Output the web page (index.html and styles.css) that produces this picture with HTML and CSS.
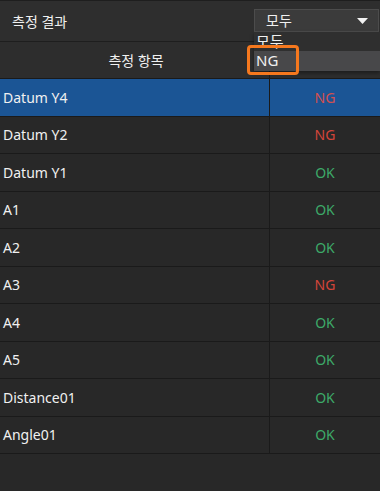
FILE: index.html
```html
<!DOCTYPE html>
<html lang="ko">
<head>
    <meta charset="UTF-8">
    <meta name="viewport" content="width=device-width, initial-scale=1.0">
    <title>측정 결과</title>
    <link rel="stylesheet" href="styles.css">
</head>
<body>
    <div class="topbar">
        <span class="topbar-title">측정 결과</span>
        <div class="combo">
            <span>모두</span>
            <svg class="combo-arrow" width="11" height="6" viewBox="0 0 11 6"><path d="M0 0 H11 L5.5 6 Z" fill="#f2f2f2"/></svg>
        </div>
        <!-- open dropdown list -->
        <div class="combo-list">
            <div class="combo-item">모두</div>
            <div class="combo-item hover">NG</div>
            <div class="highlight"></div>
        </div>
    </div>
    <div class="table">
        <div class="row header">
            <div class="cell name">측정 항목</div>
            <div class="cell result">결과</div>
        </div>
        <div class="row selected">
            <div class="cell name">Datum Y4</div>
            <div class="cell result ng">NG</div>
        </div>
        <div class="row">
            <div class="cell name">Datum Y2</div>
            <div class="cell result ng">NG</div>
        </div>
        <div class="row">
            <div class="cell name">Datum Y1</div>
            <div class="cell result ok">OK</div>
        </div>
        <div class="row">
            <div class="cell name">A1</div>
            <div class="cell result ok">OK</div>
        </div>
        <div class="row">
            <div class="cell name">A2</div>
            <div class="cell result ok">OK</div>
        </div>
        <div class="row">
            <div class="cell name">A3</div>
            <div class="cell result ng">NG</div>
        </div>
        <div class="row">
            <div class="cell name">A4</div>
            <div class="cell result ok">OK</div>
        </div>
        <div class="row">
            <div class="cell name">A5</div>
            <div class="cell result ok">OK</div>
        </div>
        <div class="row">
            <div class="cell name">Distance01</div>
            <div class="cell result ok">OK</div>
        </div>
        <div class="row">
            <div class="cell name">Angle01</div>
            <div class="cell result ok">OK</div>
        </div>
    </div>
</body>
</html>
```

FILE: styles.css
```css
body {
    margin: 0;
    background-color: #282828;
    color: #f0f0f0;
    font-family: "Noto Sans", "Noto Sans CJK KR", sans-serif;
    font-size: 14px;
    overflow: hidden;
}
.topbar {
    position: relative;
    height: 40px;
    display: flex;
    align-items: center;
    justify-content: space-between;
    padding: 0 1px 0 12px;
    background-color: #2e2e2e;
    border-top: 1px solid #1e1e1e;
    border-bottom: 1px solid #1e1e1e;
}
.topbar-title {
    margin-top: -1px;
}
.combo {
    width: 102px;
    height: 21px;
    display: flex;
    align-items: center;
    justify-content: space-between;
    padding: 0 10px 0 11px;
    margin-bottom: 1px;
    background-color: #3b3b3b;
    border: 1px solid #4c4c4c;
    line-height: 1;
}
.combo-arrow {
    display: block;
}
.combo-list {
    position: absolute;
    left: 254px;
    top: 31px;
    width: 126px;
    background-color: #2f2f2f;
    z-index: 2;
    box-shadow: 0 2px 4px rgba(0, 0, 0, 0.4);
}
.combo-item {
    height: 19px;
    line-height: 19px;
    padding-left: 2px;
    font-size: 15px;
}
.combo-item.hover {
    background-color: #48484a;
    height: 20px;
}
.highlight {
    position: absolute;
    left: -7px;
    top: 13px;
    width: 46px;
    height: 24px;
    border: 3px solid #f5781e;
    border-radius: 4px;
}
.row {
    display: grid;
    grid-template-columns: 270px 1fr;
    height: 36.5px;
    border-bottom: 1px solid #1a1a1a;
    align-items: stretch;
}
.row.header {
    height: 36px;
    background-color: #2d2d2d;
}
.row.selected {
    background-color: #1b5595;
}
.cell {
    display: flex;
    align-items: center;
}
.cell.name {
    padding-left: 3px;
    border-right: 1px solid #1a1a1a;
}
.header .cell {
    justify-content: center;
}
.cell.result {
    justify-content: center;
}
.ng {
    color: #d4453a;
}
.selected .ng {
    color: #d2504f;
}
.ok {
    color: #3daa68;
}
```
